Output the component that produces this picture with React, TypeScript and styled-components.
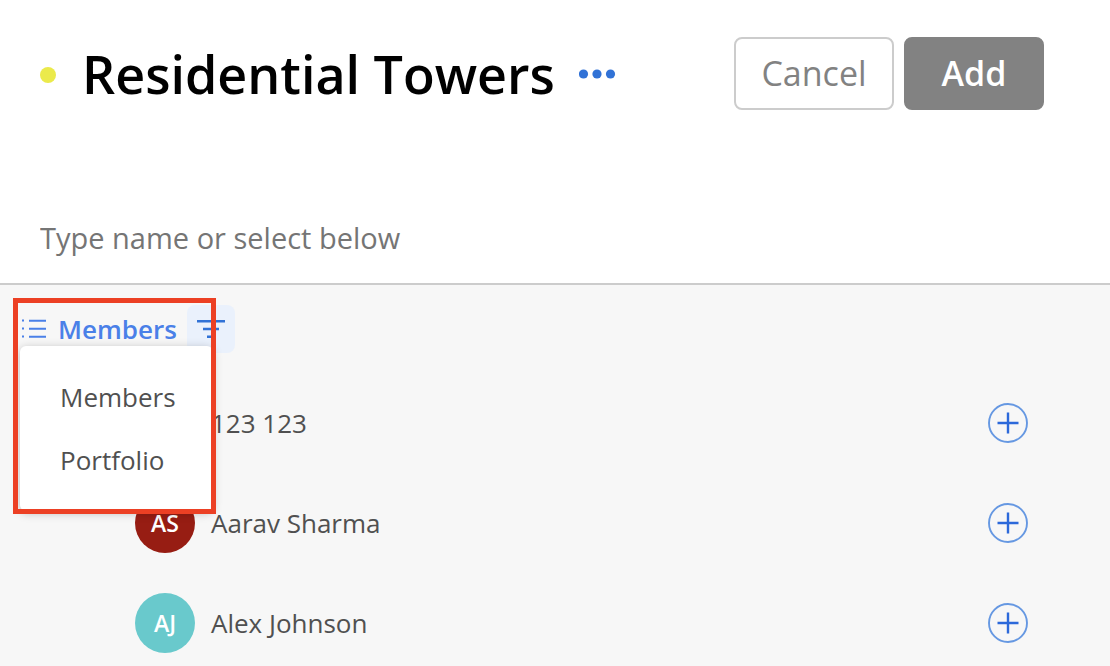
import React from 'react';
import styled, { createGlobalStyle } from 'styled-components';

const GlobalStyle = createGlobalStyle`
  *, *::before, *::after { box-sizing: border-box; }
  body {
    margin: 0;
    background: #ffffff;
    color: #505050;
    font-family: 'Open Sans', 'Noto Sans', sans-serif;
    font-size: 26px;
  }
  button, input { font-family: inherit; }
`;

const Page = styled.main`
  display: flex;
  flex-direction: column;
  height: 100vh;
  overflow: hidden;
`;

const Header = styled.header`
  display: flex;
  align-items: center;
  justify-content: space-between;
  padding: 37px 66px 0 40px;
`;

const TitleGroup = styled.div`
  display: flex;
  align-items: center;
`;

const StatusDot = styled.span`
  width: 16px;
  height: 16px;
  margin-top: 2px;
  margin-right: 24px;
  border-radius: 50%;
  background: #ebea4b;
`;

const Title = styled.h1`
  margin: 0;
  padding-left: 2px;
  color: #000000;
  font-size: 52px;
  font-weight: 600;
  line-height: 72px;
  white-space: nowrap;
`;

const PlainButton = styled.button`
  display: flex;
  align-items: center;
  padding: 0;
  border: 0;
  background: none;
  cursor: pointer;
`;

const MoreButton = styled(PlainButton)`
  margin-left: 24px;
`;

const Actions = styled.div`
  display: flex;
  gap: 10px;
`;

const ActionButton = styled.button<{ $primary?: boolean }>`
  width: ${(p) => (p.$primary ? '140px' : '160px')};
  height: 73px;
  padding: 0 0 2px;
  border: 2px solid ${(p) => (p.$primary ? '#828282' : '#cccccc')};
  border-radius: 8px;
  background: ${(p) => (p.$primary ? '#828282' : '#ffffff')};
  color: ${(p) => (p.$primary ? '#ffffff' : '#828282')};
  font-size: 34px;
  font-weight: ${(p) => (p.$primary ? 600 : 400)};
  cursor: pointer;
`;

const SearchInput = styled.input`
  width: 100%;
  height: 92px;
  flex-shrink: 0;
  margin-top: 83px;
  padding: 0 40px 2px;
  border: 0;
  border-bottom: 2px solid #cccccc;
  outline: 0;
  color: #505050;
  font-size: 29px;
  &::placeholder { color: #757575; opacity: 1; }
`;

const Panel = styled.section`
  position: relative;
  flex: 1;
  min-height: 0;
  padding-top: 20px;
  background: #f7f7f7;
`;

const Toolbar = styled.div`
  display: flex;
  align-items: center;
  padding-left: 22px;
`;

const GroupButton = styled(PlainButton)`
  gap: 12px;
  margin-right: 10px;
  color: #4a80e8;
  font-size: 26px;
  font-weight: 600;
`;

const FilterButton = styled(PlainButton)`
  justify-content: center;
  width: 48px;
  height: 48px;
  border-radius: 8px;
  background: #eaf1fc;
`;

const MemberList = styled.ul`
  margin: 20px 0 0;
  padding: 0 82px 0 135px;
  list-style: none;
`;

const MemberRow = styled.li`
  display: flex;
  align-items: center;
  gap: 16px;
  height: 100px;
`;

const Avatar = styled.span<{ $color: string }>`
  display: flex;
  align-items: center;
  justify-content: center;
  width: 60px;
  height: 60px;
  border-radius: 50%;
  background: ${(p) => p.$color};
  color: #ffffff;
  font-size: 23px;
  font-weight: 600;
`;

const MemberName = styled.span`
  flex: 1;
`;

const Menu = styled.div`
  position: absolute;
  top: 61px;
  left: 20px;
  width: 193px;
  padding: 19px 0 20px;
  border-radius: 6px;
  background: #ffffff;
  box-shadow: 0 2px 10px rgba(0, 0, 0, 0.25);
`;

const MenuItem = styled(PlainButton)`
  width: 100%;
  height: 63px;
  padding-left: 40px;
  color: #505050;
  font-size: 26px;
`;

const Highlight = styled.div`
  position: absolute;
  top: 13px;
  left: 13px;
  width: 203px;
  height: 216px;
  border: 5px solid #ec4024;
  pointer-events: none;
`;

const MoreIcon = () => (
  <svg width="38" height="10" viewBox="0 0 38 10" fill="#3172d6" aria-hidden="true">
    <circle cx="4.5" cy="5" r="4.6" />
    <circle cx="18" cy="5" r="4.6" />
    <circle cx="31.5" cy="5" r="4.6" />
  </svg>
);

const ListIcon = () => (
  <svg width="24" height="20" viewBox="0 0 24 20" stroke="#4a80e8" strokeWidth="2" aria-hidden="true">
    <path d="M0 1.5h2M7 1.7h17M0 9.5h2M7 9.7h17M0 17.5h2M7 17.7h17" />
  </svg>
);

const FilterIcon = () => (
  <svg width="28" height="20" viewBox="0 0 28 20" stroke="#3172d6" strokeWidth="2.6" aria-hidden="true">
    <path d="M0 2.2h28M6 10h16M10 17.7h8" />
  </svg>
);

const AddIcon = () => (
  <svg width="40" height="40" viewBox="0 0 40 40" fill="none" aria-hidden="true">
    <circle cx="20" cy="20" r="19" stroke="#6698e2" strokeWidth="1.9" />
    <path d="M9.5 20h21M20 9.5v21" stroke="#2c69da" strokeWidth="2.4" />
  </svg>
);

const members = [
  { name: '123 123', initials: '', color: '#5f7f9f' },
  { name: 'Aarav Sharma', initials: 'AS', color: '#971d13' },
  { name: 'Alex Johnson', initials: 'AJ', color: '#69c9cc' },
];

export default function App() {
  return (
    <>
      <GlobalStyle />
      <Page>
        <Header>
          <TitleGroup>
            <StatusDot />
            <Title>Residential Towers</Title>
            <MoreButton type="button" aria-label="More options"><MoreIcon /></MoreButton>
          </TitleGroup>
          <Actions>
            <ActionButton type="button">Cancel</ActionButton>
            <ActionButton type="button" $primary>Add</ActionButton>
          </Actions>
        </Header>
        <SearchInput type="text" aria-label="Search members" placeholder="Type name or select below" />
        <Panel>
          <Toolbar>
            <GroupButton type="button" aria-haspopup="menu" aria-expanded="true">
              <ListIcon />
              Members
            </GroupButton>
            <FilterButton type="button" aria-label="Filter"><FilterIcon /></FilterButton>
          </Toolbar>
          <MemberList>
            {members.map((m) => (
              <MemberRow key={m.name}>
                <Avatar $color={m.color}>{m.initials}</Avatar>
                <MemberName>{m.name}</MemberName>
                <PlainButton type="button" aria-label={`Add ${m.name}`}><AddIcon /></PlainButton>
              </MemberRow>
            ))}
          </MemberList>
          <Menu role="menu">
            <MenuItem type="button" role="menuitem">Members</MenuItem>
            <MenuItem type="button" role="menuitem">Portfolio</MenuItem>
          </Menu>
          <Highlight />
        </Panel>
      </Page>
    </>
  );
}
